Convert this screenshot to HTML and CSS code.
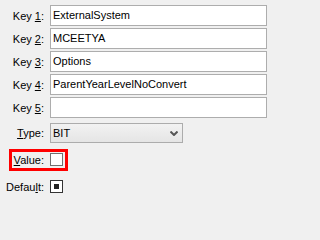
FILE: index.html
```html
<!DOCTYPE html>
<html>
<head>
<meta charset="utf-8">
<link rel="stylesheet" href="styles.css">
</head>
<body>
<div class="form">
  <div class="row">
    <span class="lbl">Key <u>1</u>:</span>
    <div class="field">ExternalSystem</div>
  </div>
  <div class="row">
    <span class="lbl">Key <u>2</u>:</span>
    <div class="field">MCEETYA</div>
  </div>
  <div class="row">
    <span class="lbl">Key <u>3</u>:</span>
    <div class="field">Options</div>
  </div>
  <div class="row">
    <span class="lbl">Key <u>4</u>:</span>
    <div class="field">ParentYearLevelNoConvert</div>
  </div>
  <div class="row">
    <span class="lbl">Key <u>5</u>:</span>
    <div class="field"></div>
  </div>
  <div class="row row-select">
    <span class="lbl"><u>T</u>ype:</span>
    <div class="select">
      <span>BIT</span>
      <svg class="chev" width="8" height="5" viewBox="0 0 8 5"><path d="M0.5 0.5 L4 4 L7.5 0.5" fill="none" stroke="#555" stroke-width="2"/></svg>
    </div>
  </div>
  <div class="row row-check row-value">
    <span class="lbl"><u>V</u>alue:</span>
    <span class="check"></span>
  </div>
  <div class="row row-check row-default">
    <span class="lbl">Defau<u>l</u>t:</span>
    <span class="check check-mixed"><span class="mark"></span></span>
  </div>
</div>
</body>
</html>
```

FILE: styles.css
```css
html, body {
  margin: 0;
  padding: 0;
  background: #f0f0f0;
}
body {
  font-family: "Liberation Sans", Arial, sans-serif;
  font-size: 11px;
  color: #000;
  width: 270px;
  height: 201px;
  overflow: hidden;
}
.form {
  display: flex;
  flex-direction: column;
  gap: 2px;
  padding: 5px 3px 0 0;
}
.row {
  display: flex;
  align-items: center;
  gap: 6px;
  height: 21px;
}
.lbl {
  flex: none;
  width: 44px;
  text-align: right;
  white-space: nowrap;
}
.lbl u {
  text-decoration: underline;
  text-underline-offset: 1px;
}
.field {
  flex: 1;
  box-sizing: border-box;
  height: 21px;
  border: 1px solid #adadad;
  background: #fff;
  padding-left: 2px;
  line-height: 19px;
  white-space: nowrap;
  overflow: hidden;
}
.row-select {
  margin-top: 3px;
  height: 20px;
}
.select {
  box-sizing: border-box;
  width: 133px;
  height: 20px;
  border: 1px solid #acacac;
  background: linear-gradient(#f2f2f2, #e5e5e5);
  display: flex;
  align-items: center;
  justify-content: space-between;
  padding: 0 4px 0 2px;
}
.chev {
  display: block;
}
.row-check {
  height: 13px;
}
.row-value {
  margin-top: 8px;
  position: relative;
}
.row-value::before {
  content: "";
  position: absolute;
  left: 9px;
  top: -4px;
  width: 59px;
  height: 22px;
  box-sizing: border-box;
  border: 3px solid #ff0000;
}
.row-default {
  margin-top: 12px;
}
.check {
  box-sizing: border-box;
  width: 13px;
  height: 13px;
  border: 1px solid #707070;
  background: #fff;
  display: flex;
  align-items: center;
  justify-content: center;
}
.check-mixed {
  border-color: #333;
}
.mark {
  width: 5px;
  height: 5px;
  background: #222;
}
```
